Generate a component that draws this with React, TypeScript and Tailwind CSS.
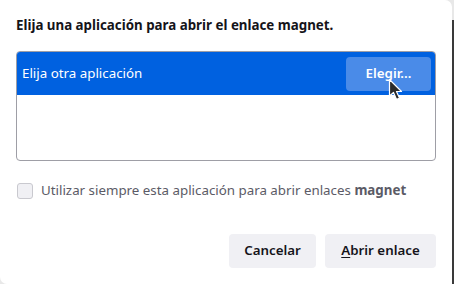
import React from 'react';

const Cursor: React.FC = () => (
  <svg
    className="absolute left-[388px] top-[78px]"
    width="16"
    height="24"
    viewBox="0 0 16 24"
  >
    <path
      d="M1.5 1.5 L1.5 18 L5.5 14.5 L8.5 21.5 L11.5 20 L8.5 13.5 L13.5 13.5 Z"
      fill="#2b2b2b"
      stroke="#ffffff"
      strokeWidth="1.2"
      strokeLinejoin="round"
    />
  </svg>
);

const App: React.FC = () => {
  return (
    <div className="relative w-[454px] h-[284px] bg-[#e8e8e8] overflow-hidden font-['Noto_Sans',sans-serif]">
      {/* Dialog */}
      <div className="w-[452px] h-[284px] bg-white rounded-tr-[7px] rounded-bl-[7px] flex flex-col px-4">
        <h1 className="mt-[16px] text-[13.33px] leading-[19px] font-bold text-[#15141a]">
          Elija una aplicación para abrir el enlace magnet.
        </h1>

        {/* App list */}
        <div className="mt-[16px] h-[110px] border border-[#9e9ea6] rounded-[4px] overflow-hidden">
          <div className="h-[43px] bg-[#0061e0] flex items-center justify-between pl-[5px] pr-[4px]">
            <span className="text-[13.33px] text-white">Elija otra aplicación</span>
            <button className="w-[85px] h-[34px] rounded-[4px] bg-[#4a8be8] text-[13.33px] font-semibold text-white">
              Elegir...
            </button>
          </div>
        </div>

        {/* Checkbox */}
        <label className="mt-[20px] flex items-center gap-[8px]">
          <span className="ml-[1px] w-[16px] h-[16px] rounded-[3px] border border-[#c9c9cf] bg-[#f0f0f4]" />
          <span className="text-[13.33px] leading-[19px] text-[#5b5b66]">
            Utilizar siempre esta aplicación para abrir enlaces{' '}
            <b className="font-bold text-[#5b5b66]">magnet</b>
          </span>
        </label>

        {/* Footer */}
        <div className="mt-auto mb-[16px] flex justify-end gap-[9px]">
          <button className="w-[87px] h-[34px] rounded-[4px] bg-[#f0f0f4] text-[13.33px] font-semibold text-[#15141a]">
            Cancelar
          </button>
          <button className="w-[111px] h-[34px] rounded-[4px] bg-[#f0f0f4] text-[13.33px] font-semibold text-[#15141a]">
            <span className="underline underline-offset-2">A</span>brir enlace
          </button>
        </div>
      </div>
      <div className="absolute right-0 top-[20px] w-[2px] h-[264px] bg-[#3a3a3a]" />
      <Cursor />
    </div>
  );
};

export default App;
